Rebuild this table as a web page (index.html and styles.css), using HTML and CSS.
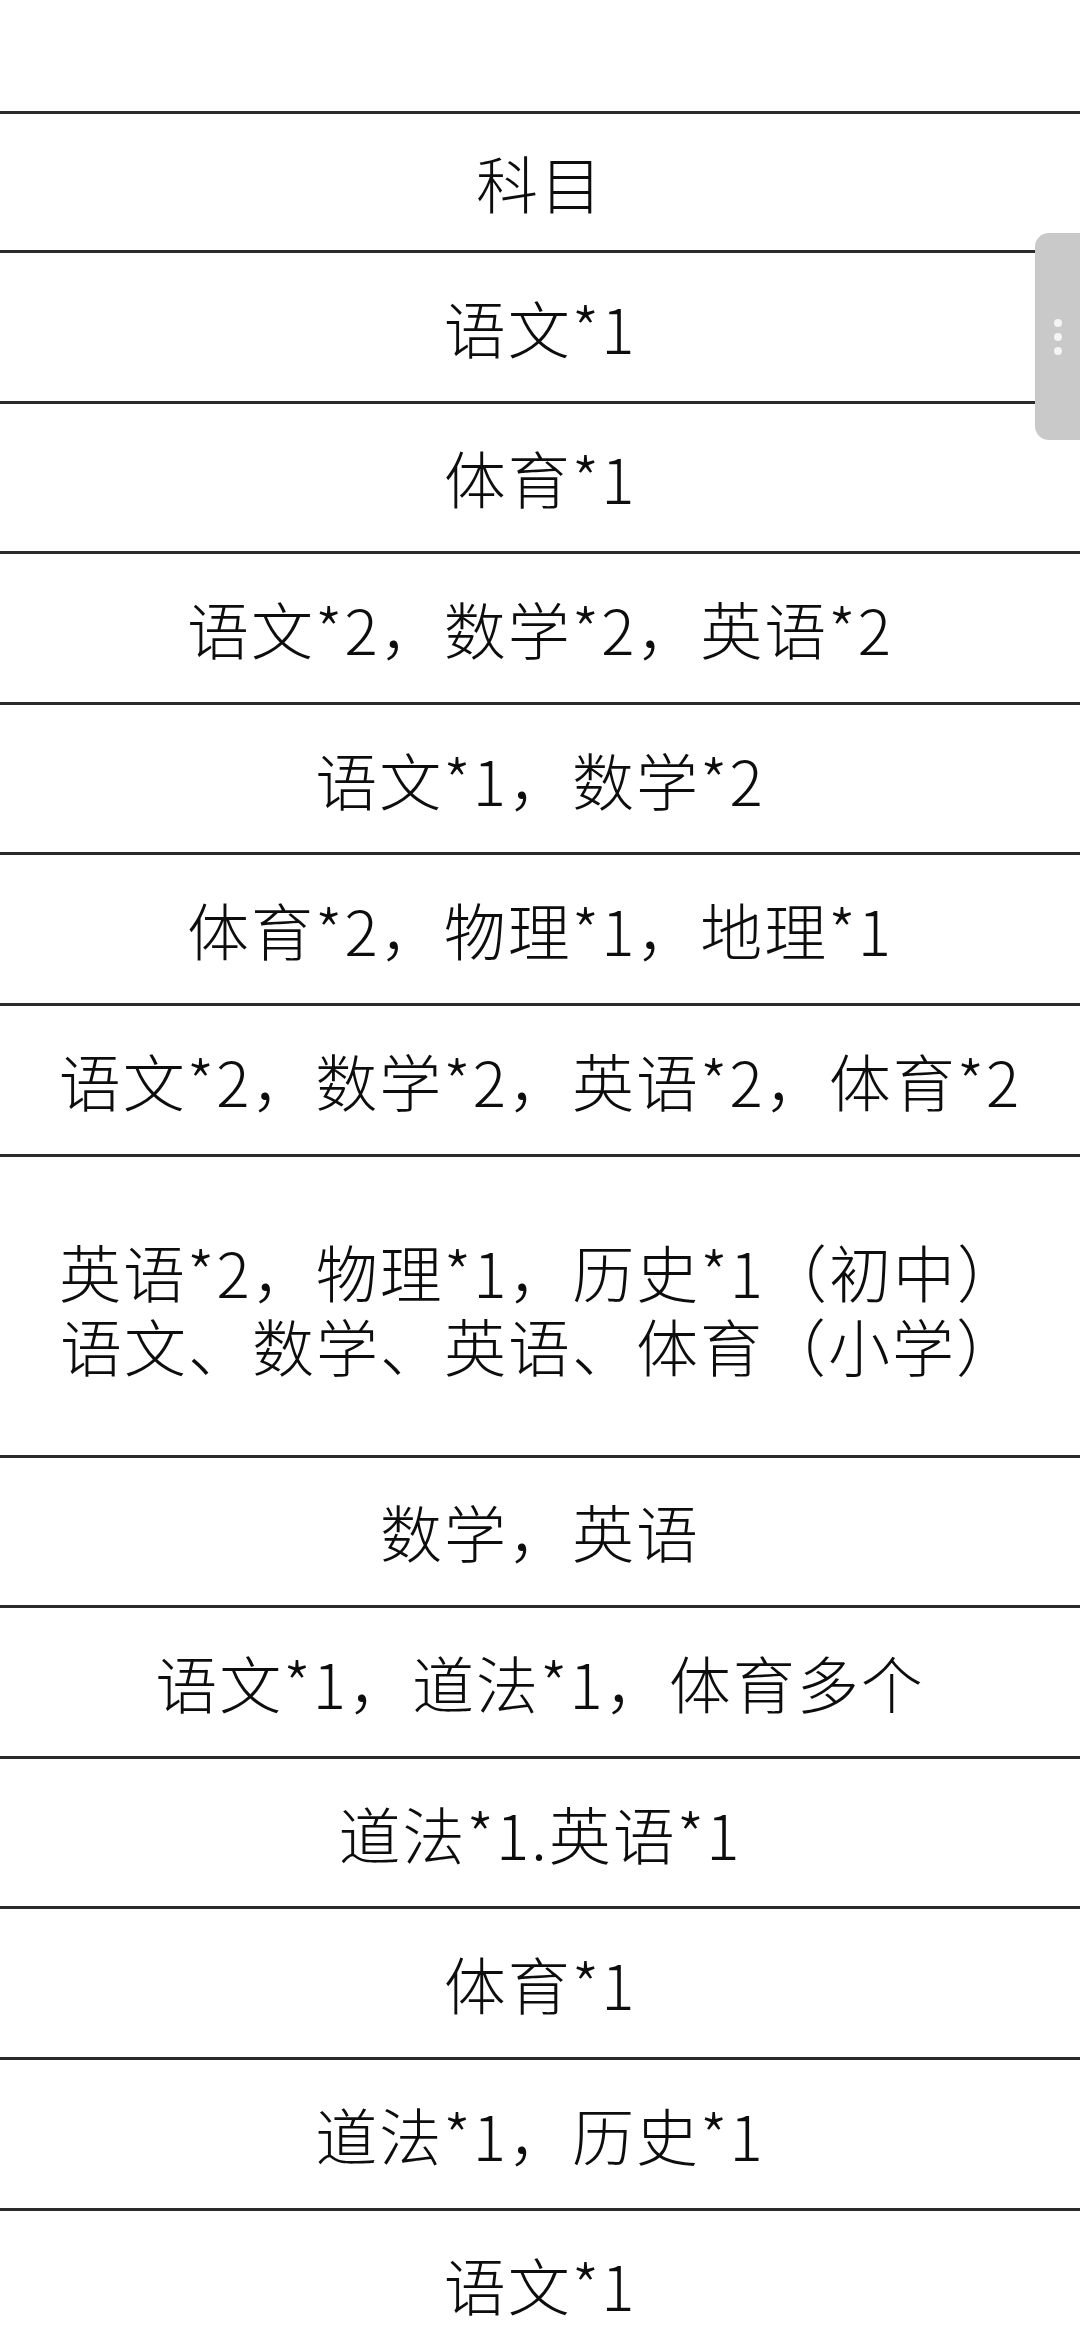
FILE: index.html
```html
<!DOCTYPE html>
<html lang="zh-CN">
<head>
<meta charset="utf-8">
<title>科目</title>
<link rel="stylesheet" href="styles.css">
</head>
<body>
<div class="sheet">
  <div class="row head">科目</div>
  <div class="row">语文*1</div>
  <div class="row">体育*1</div>
  <div class="row">语文*2，数学*2，英语*2</div>
  <div class="row">语文*1，数学*2</div>
  <div class="row">体育*2，物理*1，地理*1</div>
  <div class="row">语文*2，数学*2，英语*2，体育*2</div>
  <div class="row tall"><span class="line">英语*2，物理*1，历史*1（初中）</span><span class="line">语文、数学、英语、体育（小学）</span></div>
  <div class="row">数学，英语</div>
  <div class="row">语文*1，道法*1，体育多个</div>
  <div class="row">道法*1.英语*1</div>
  <div class="row">体育*1</div>
  <div class="row">道法*1，历史*1</div>
  <div class="row">语文*1</div>
</div>
<div class="handle"><i></i><i></i><i></i></div>
</body>
</html>
```

FILE: styles.css
```css
html, body {
  margin: 0;
  padding: 0;
  background: #ffffff;
}
body {
  width: 1080px;
  height: 2339px;
  overflow: hidden;
  font-family: "Noto Sans CJK SC", "Noto Sans", sans-serif;
  font-weight: 300;
  color: #0d0d0d;
}
.sheet {
  padding-top: 111px;
}
.row {
  box-sizing: border-box;
  height: 150.6px;
  border-top: 3px solid #2b2b2b;
  display: flex;
  flex-direction: column;
  align-items: center;
  justify-content: center;
  font-size: 62px;
  line-height: 74px;
  letter-spacing: 2px;
  white-space: nowrap;
}
.row.head {
  height: 139px;
}
.row.tall {
  height: 301px;
  padding-top: 4px;
}
.row .line {
  display: block;
  height: 74px;
}
.handle {
  position: fixed;
  top: 233px;
  right: 0;
  width: 45px;
  height: 207px;
  background: #c9c9c9;
  border-radius: 14px 0 0 14px;
  display: flex;
  flex-direction: column;
  align-items: center;
  justify-content: center;
  gap: 6px;
}
.handle i {
  display: block;
  width: 8px;
  height: 8px;
  border-radius: 50%;
  background: #f4f4f4;
}
```
